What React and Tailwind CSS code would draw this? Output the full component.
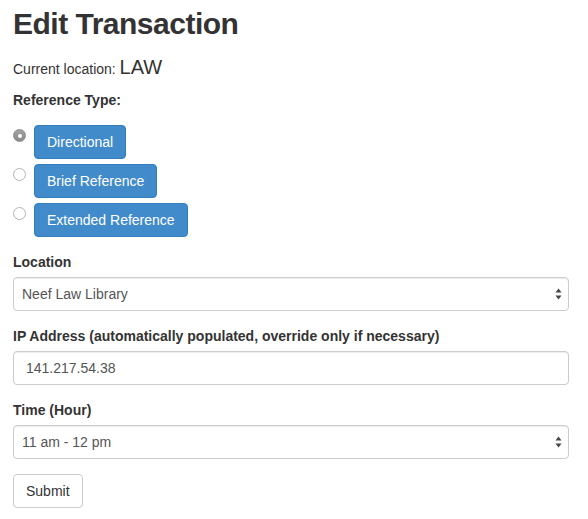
const refTypes = [
  { label: "Directional", checked: true },
  { label: "Brief Reference", checked: false },
  { label: "Extended Reference", checked: false },
];

function Radio({ checked }) {
  // macOS-ish radio, checked one is greyed out
  if (checked) {
    return (
      <span className="mt-[4px] flex h-[13px] w-[13px] shrink-0 items-center justify-center rounded-full border border-[#8c8c8c] bg-gradient-to-b from-[#a2a2a2] to-[#8a8a8a]">
        <span className="h-[4px] w-[4px] rounded-full bg-white" />
      </span>
    );
  }
  return (
    <span className="mt-[4px] h-[13px] w-[13px] shrink-0 rounded-full border border-[#b3b3b3] bg-white" />
  );
}

function SelectBox({ value }) {
  return (
    <div className="flex h-[34px] w-full items-center justify-between rounded-[4px] border border-[#ccc] bg-white pl-[8px] pr-[6px] text-[14px] text-[#555] shadow-[inset_0_1px_1px_rgba(0,0,0,0.075)]">
      <span>{value}</span>
      <svg width="7" height="12" viewBox="0 0 7 12" className="text-[#444]">
        <path d="M3.5 0.5 L6.5 4.5 L0.5 4.5 Z" fill="currentColor" />
        <path d="M0.5 7.5 L6.5 7.5 L3.5 11.5 Z" fill="currentColor" />
      </svg>
    </div>
  );
}

export default function App() {
  return (
    <div className="min-h-screen bg-white font-['Liberation_Sans',Arial,sans-serif] text-[14px] text-[#333]">
      <div className="w-[569px] pl-[13px]">
        {/* heading */}
        <h1 className="mt-[8px] text-[30px] leading-[32px] font-bold tracking-[-0.5px]">
          Edit Transaction
        </h1>

        <p className="mt-[15px] leading-[24px]">
          Current location: <span className="text-[20px]">LAW</span>
        </p>

        {/* reference type */}
        <div className="mt-[9px] mb-[15px]">
          <label className="block leading-[20px] font-bold">Reference Type:</label>
          <div className="mt-[15px] flex flex-col gap-[5px]">
            {refTypes.map((t) => (
              <div key={t.label} className="flex items-start gap-[8px]">
                <Radio checked={t.checked} />
                <button className="h-[34px] rounded-[4px] border border-[#357ebd] bg-[#428bca] px-3 leading-[20px] text-white">
                  {t.label}
                </button>
              </div>
            ))}
          </div>
        </div>

        <div className="mb-[15px]">
          <label className="mb-[5px] block leading-[20px] font-bold">Location</label>
          <SelectBox value="Neef Law Library" />
        </div>

        <div className="mb-[15px]">
          <label className="mb-[5px] block leading-[20px] font-bold">
            IP Address (automatically populated, override only if necessary)
          </label>
          <div className="flex h-[34px] w-full items-center rounded-[4px] border border-[#ccc] bg-white px-3 text-[#555] shadow-[inset_0_1px_1px_rgba(0,0,0,0.075)]">
            141.217.54.38
          </div>
        </div>

        <div className="mb-[15px]">
          <label className="mb-[5px] block leading-[20px] font-bold">Time (Hour)</label>
          <SelectBox value="11 am - 12 pm" />
        </div>

        <button className="h-[34px] rounded-[4px] border border-[#ccc] bg-white px-3 leading-[20px] text-[#333]">
          Submit
        </button>
      </div>
    </div>
  );
}
